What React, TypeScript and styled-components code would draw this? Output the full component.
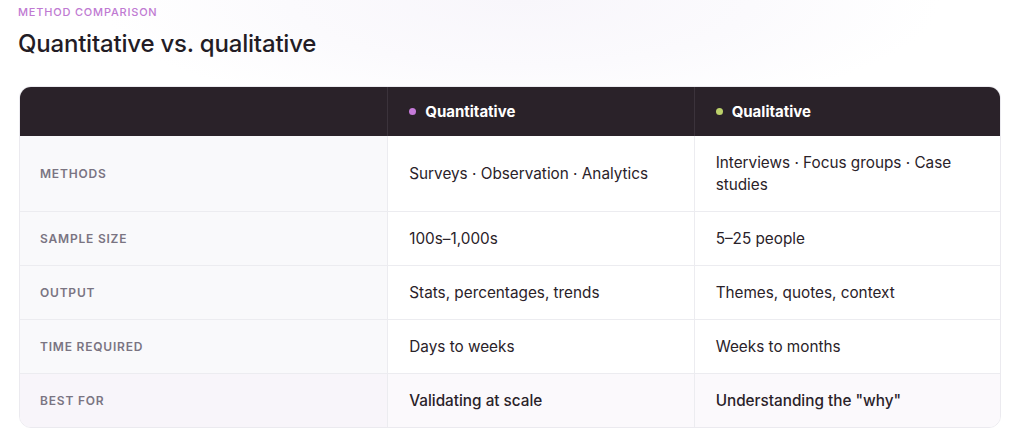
import styled, { createGlobalStyle } from "styled-components";

const GlobalStyle = createGlobalStyle`
  html, body {
    margin: 0;
    padding: 0;
    background: #ffffff;
  }
  body {
    font-family: Inter, "Noto Sans", sans-serif;
    color: #231c25;
  }
`;

const Page = styled.div`
  min-height: 445px;
  box-sizing: border-box;
  padding: 5px 20px 0 19px;
  background: radial-gradient(
    ellipse 420px 120px at 520px 0px,
    #f8f6fb 0%,
    #fbfafd 55%,
    #ffffff 100%
  );
`;

const Eyebrow = styled.div`
  margin-left: -1px;
  font-size: 11px;
  font-weight: 500;
  letter-spacing: 0.8px;
  color: #c07ad2;
  text-transform: uppercase;
  line-height: 15px;
`;

const Title = styled.h1`
  margin: 9px 0 0;
  margin-left: -1px;
  font-size: 24px;
  font-weight: 500;
  letter-spacing: -0.2px;
  line-height: 30px;
  color: #231c25;
`;

const Table = styled.div`
  margin-top: 27px;
  display: grid;
  grid-template-columns: 368fr 307fr 307fr;
  border: 1px solid #ebeaef;
  border-radius: 12px;
  overflow: hidden;
  background: #ffffff;
`;

const HeadCell = styled.div`
  height: 49px;
  box-sizing: border-box;
  background: #2a2229;
  display: flex;
  align-items: center;
  gap: 9px;
  padding: 0 21px;
  color: #ffffff;
  font-size: 15px;
  font-weight: 700;
  & + & {
    border-left: 1px solid #3b333b;
  }
`;

const Dot = styled.span<{ $color: string }>`
  width: 7px;
  height: 7px;
  border-radius: 50%;
  background: ${(p) => p.$color};
`;

const Label = styled.div<{ $tall?: boolean; $last?: boolean }>`
  min-height: ${(p) => (p.$tall ? 75 : 54)}px;
  box-sizing: border-box;
  display: flex;
  align-items: center;
  padding: 0 20px;
  background: ${(p) => (p.$last ? "#f8f5fa" : "#f9f9fb")};
  border-top: 1px solid #ececf0;
  font-size: 12px;
  font-weight: 600;
  letter-spacing: 0.8px;
  text-transform: uppercase;
  color: #7a7482;
  &:nth-child(4) {
    border-top: none;
  }
`;

const Cell = styled.div<{ $last?: boolean }>`
  box-sizing: border-box;
  display: flex;
  align-items: center;
  padding: 0 30px 0 21px;
  background: ${(p) => (p.$last ? "#fbf9fc" : "#ffffff")};
  border-top: 1px solid #ececf0;
  border-left: 1px solid #ececf0;
  font-size: 15.3px;
  font-weight: ${(p) => (p.$last ? 500 : 400)};
  line-height: 22px;
  color: #2a2229;
  &:nth-child(5),
  &:nth-child(6) {
    border-top: none;
  }
`;

const rows = [
  {
    label: "Methods",
    quant: "Surveys · Observation · Analytics",
    qual: "Interviews · Focus groups · Case studies",
    tall: true,
  },
  { label: "Sample size", quant: "100s–1,000s", qual: "5–25 people" },
  { label: "Output", quant: "Stats, percentages, trends", qual: "Themes, quotes, context" },
  { label: "Time required", quant: "Days to weeks", qual: "Weeks to months" },
  { label: "Best for", quant: "Validating at scale", qual: 'Understanding the "why"' },
];

export default function App() {
  return (
    <>
      <GlobalStyle />
      <Page>
        <Eyebrow>Method comparison</Eyebrow>
        <Title>Quantitative vs. qualitative</Title>
        <Table>
          <HeadCell />
          <HeadCell>
            <Dot $color="#c57ad9" />
            Quantitative
          </HeadCell>
          <HeadCell>
            <Dot $color="#bcd16a" />
            Qualitative
          </HeadCell>
          {rows.map((r, i) => {
            const last = i === rows.length - 1;
            return [
              <Label key={r.label} $tall={r.tall} $last={last}>
                {r.label}
              </Label>,
              <Cell key={r.label + "-a"} $last={last}>
                {r.quant}
              </Cell>,
              <Cell key={r.label + "-b"} $last={last}>
                {r.qual}
              </Cell>,
            ];
          })}
        </Table>
      </Page>
    </>
  );
}
